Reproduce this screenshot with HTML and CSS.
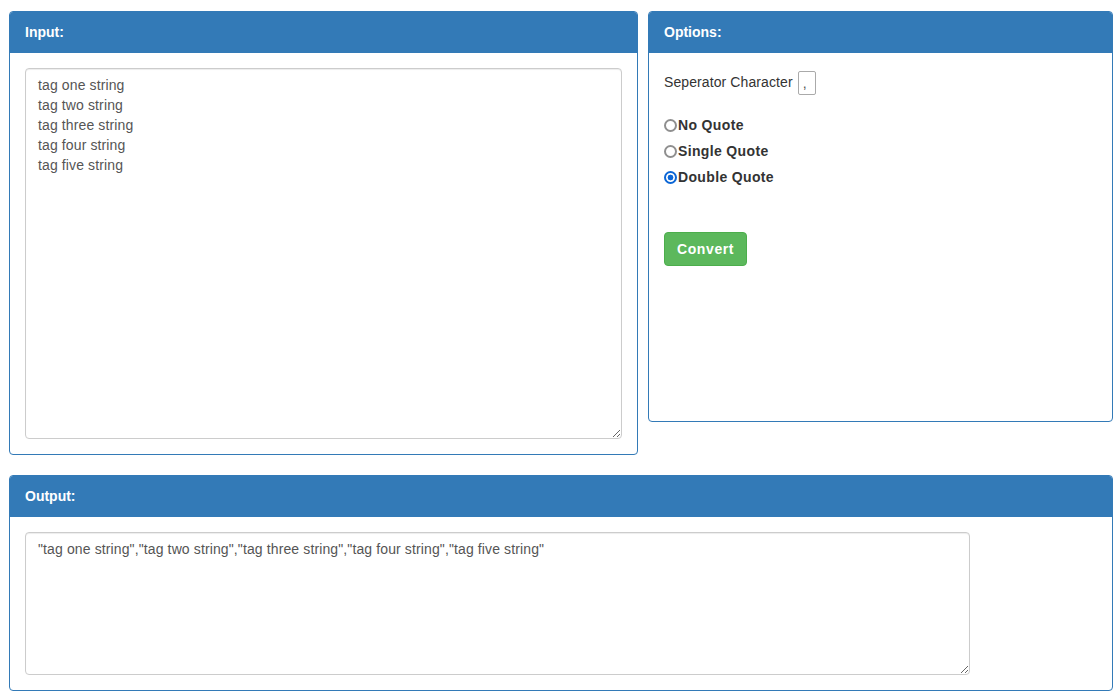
FILE: index.html
```html
<!DOCTYPE html>
<html>
<head lang="en">
    <meta charset="UTF-8">
    <title>String Converter</title>
    <link rel="stylesheet" href="styles.css">
</head>
<body>

<div class="top-row">
    <!-- 输入区 -->
    <div class="panel panel-input">
        <div class="panel-heading">Input:</div>
        <div class="panel-body">
            <textarea class="form-control input-area">tag one string
tag two string
tag three string
tag four string
tag five string</textarea>
        </div>
    </div>

    <!-- 选项区 -->
    <div class="panel panel-options">
        <div class="panel-heading">Options:</div>
        <div class="panel-body options-body">
            <div class="sep-row">
                <span>Seperator Character</span>
                <input type="text" class="sep-input" value=",">
            </div>
            <div class="quote-list">
                <label><input type="radio" name="quote">No Quote</label>
                <label><input type="radio" name="quote">Single Quote</label>
                <label><input type="radio" name="quote" checked>Double Quote</label>
            </div>
            <button class="btn btn-success">Convert</button>
        </div>
    </div>
</div>

<!-- 输出区 -->
<div class="panel panel-output">
    <div class="panel-heading">Output:</div>
    <div class="panel-body">
        <textarea class="form-control output-area">"tag one string","tag two string","tag three string","tag four string","tag five string"</textarea>
    </div>
</div>

</body>
</html>
```

FILE: styles.css
```css
body {
    margin: 0;
    padding: 11px 0 0 9px;
    font: 400 14px/20px "Liberation Sans", Arial, Helvetica, sans-serif;
    color: #333;
    background: #fff;
}

/* 上面两栏 */
.top-row {
    display: flex;
    align-items: flex-start;
    gap: 10px;
    width: 1104px;
}

/* panel-primary 样式 */
.panel {
    border: 1px solid #337ab7;
    border-radius: 4px;
    background: #fff;
    margin-bottom: 20px;
}

.panel-heading {
    padding: 10px 15px;
    background: #337ab7;
    border-bottom: 1px solid #337ab7;
    border-radius: 3px 3px 0 0;
    color: #fff;
    font-weight: bold;
}

.panel-body {
    padding: 15px;
}

.panel-input {
    width: 629px;
    box-sizing: border-box;
}

.panel-options {
    width: 465px;
    box-sizing: border-box;
}

.panel-output {
    width: 1104px;
    box-sizing: border-box;
}

/* 文本框 */
.form-control {
    display: block;
    box-sizing: border-box;
    padding: 6px 12px;
    border: 1px solid #ccc;
    border-radius: 4px;
    box-shadow: inset 0 1px 1px rgba(0, 0, 0, .075);
    font: inherit;
    letter-spacing: 0.12px;
    color: #555;
    margin: 0;
}

.input-area {
    width: 597px;
    height: 371px;
}

.output-area {
    width: 945px;
    height: 143px;
}

/* 选项 */
.options-body {
    height: 368px;
    box-sizing: border-box;
}

.sep-row {
    display: flex;
    align-items: center;
    gap: 5px;
    height: 27px;
    letter-spacing: 0.1px;
}

.sep-input {
    width: 18px;
    height: 24px;
    box-sizing: border-box;
    padding: 0 4px;
    border: 1px solid #aaa;
    border-radius: 2px;
    font: inherit;
    color: #555;
    margin-top: 2px;
}

.quote-list {
    display: flex;
    flex-direction: column;
    gap: 6px;
    margin-top: 20px;
}

.quote-list label {
    display: flex;
    align-items: center;
    font-weight: bold;
    letter-spacing: 0.35px;
}

/* 单选圆圈 */
.quote-list input {
    appearance: none;
    -webkit-appearance: none;
    box-sizing: border-box;
    width: 13px;
    height: 13px;
    margin: 0 1px 0 0;
    border: 2px solid #8f8f8f;
    border-radius: 50%;
    background: #fff;
}

.quote-list input:checked {
    border-color: #0b66d6;
    background: radial-gradient(circle, #0b66d6 0 2.6px, #fff 3.2px);
}

/* 转换按钮 */
.btn {
    display: block;
    margin-top: 45px;
    padding: 6px 12px;
    height: 34px;
    border: 1px solid #4cae4c;
    border-radius: 4px;
    background: #5cb85c;
    color: #fff;
    font: bold 14px/20px "Liberation Sans", Arial, sans-serif;
    letter-spacing: 0.6px;
}
```
